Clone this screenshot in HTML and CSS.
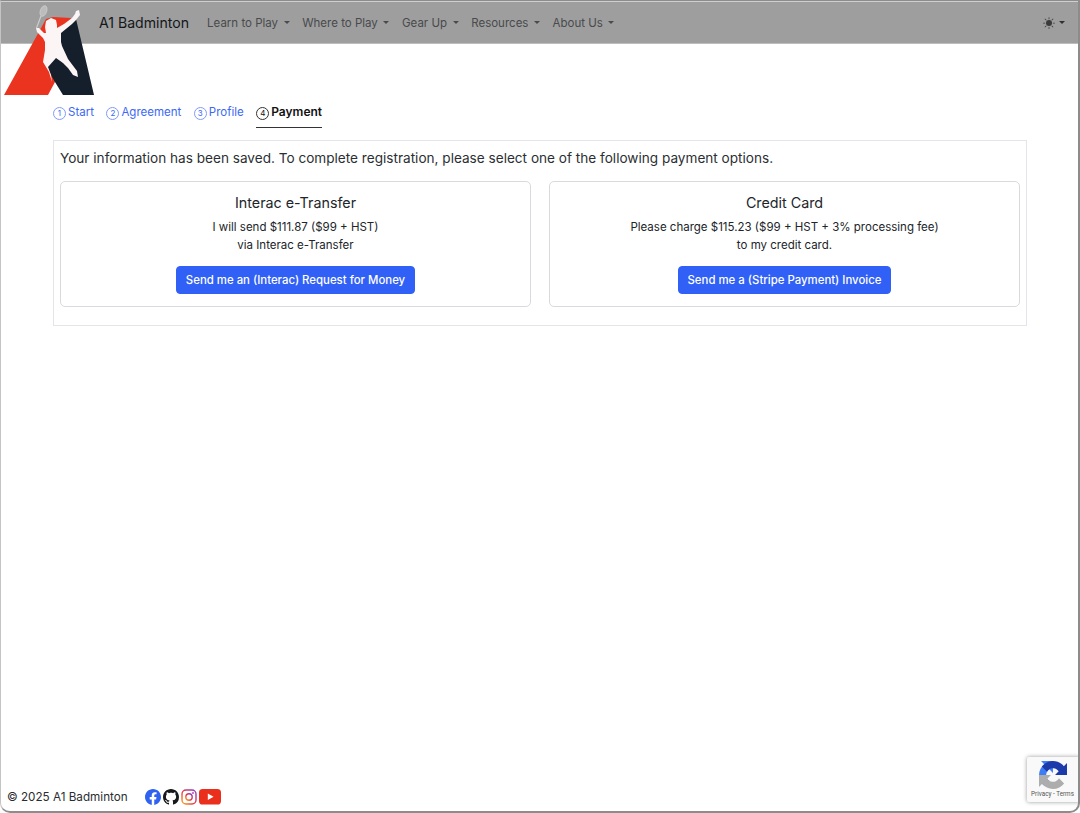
FILE: index.html
```html
<!DOCTYPE html>
<html lang="en">
<head>
<meta charset="utf-8">
<title>A1 Badminton</title>
<link rel="stylesheet" href="styles.css">
</head>
<body>
<div class="page">
  <nav class="navbar">
    <span class="brand">A1 Badminton</span>
    <ul class="menu">
      <li class="menu-item">Learn to Play<i class="caret"></i></li>
      <li class="menu-item">Where to Play<i class="caret"></i></li>
      <li class="menu-item">Gear Up<i class="caret"></i></li>
      <li class="menu-item">Resources<i class="caret"></i></li>
      <li class="menu-item">About Us<i class="caret"></i></li>
    </ul>
    <div class="theme">
      <svg class="sun" viewBox="0 0 16 16" aria-hidden="true"><path fill="#3a3a3a" d="M12 8a4 4 0 1 1-8 0 4 4 0 0 1 8 0zM8 0a.5.5 0 0 1 .5.5v2a.5.5 0 0 1-1 0v-2A.5.5 0 0 1 8 0zm0 13a.5.5 0 0 1 .5.5v2a.5.5 0 0 1-1 0v-2A.5.5 0 0 1 8 13zm8-5a.5.5 0 0 1-.5.5h-2a.5.5 0 0 1 0-1h2a.5.5 0 0 1 .5.5zM3 8a.5.5 0 0 1-.5.5h-2a.5.5 0 0 1 0-1h2A.5.5 0 0 1 3 8zm10.66-5.66a.5.5 0 0 1 0 .71l-1.41 1.41a.5.5 0 1 1-.71-.71l1.41-1.41a.5.5 0 0 1 .71 0zM4.46 11.54a.5.5 0 0 1 0 .71l-1.41 1.41a.5.5 0 0 1-.71-.71l1.41-1.41a.5.5 0 0 1 .71 0zm9.2 2.12a.5.5 0 0 1-.71 0l-1.41-1.41a.5.5 0 0 1 .71-.71l1.41 1.41a.5.5 0 0 1 0 .71zM4.46 4.46a.5.5 0 0 1-.71 0L2.34 3.05a.5.5 0 1 1 .71-.71l1.41 1.41a.5.5 0 0 1 0 .71z"/></svg>
      <i class="caret caret-dark"></i>
    </div>
  </nav>

  <svg class="logo" viewBox="0 0 100 100" aria-hidden="true">
    <path fill="#ea3420" d="M4 95 L46 19 L53 17 L71 18 L60 60 L55 82 L48 95 Z"/>
    <path fill="#151e2b" d="M76 19 L94 95 H63 L55 82 L52 77 L47 66 L55 57 L60 33 Z"/>
    <path fill="#fbf5f5" d="M79 10 L80 15 L76 20 L72 24 L61 33 L61 42 L62 46 L68 59 L77 71 L78 77 L73 75 L68 68 L63 63 L56 58 L48 67 L51 75 L52 82 L49 72 L43 62 L45 50 L45 42 L43 38 L37 32 L36 28 L39 28 L44 33 L46 33 L45 27 L46 21 L51 18 L56 20 L57 25 L57 28 L64 24 L72 18 L75 14 L76 11 Z"/>
    <path fill="none" stroke="#cfcfcf" stroke-width="1.2" d="M41 16 L36.5 28"/>
    <ellipse cx="43.5" cy="11" rx="3.2" ry="5.5" transform="rotate(20 43.5 11)" fill="#bcbcbc" stroke="#d4d4d4" stroke-width=".6"/>
  </svg>

  <main class="content">
    <ul class="steps">
      <li class="step"><span class="num">1</span>Start</li>
      <li class="step"><span class="num">2</span>Agreement</li>
      <li class="step"><span class="num">3</span>Profile</li>
      <li class="step step-active"><span class="num">4</span>Payment</li>
    </ul>

    <section class="panel">
      <p class="lead">Your information has been saved. To complete registration, please select one of the following payment options.</p>
      <div class="options">
        <article class="card">
          <h2 class="card-title">Interac e-Transfer</h2>
          <p class="card-text">I will send $111.87 ($99 + HST)<br>via Interac e-Transfer</p>
          <button class="btn">Send me an (Interac) Request for Money</button>
        </article>
        <article class="card">
          <h2 class="card-title">Credit Card</h2>
          <p class="card-text">Please charge $115.23 ($99 + HST + 3% processing fee)<br>to my credit card.</p>
          <button class="btn">Send me a (Stripe Payment) Invoice</button>
        </article>
      </div>
    </section>
  </main>

  <footer class="footer">
    <span class="copy">© 2025 A1 Badminton</span>
    <div class="socials">
      <svg class="soc" viewBox="0 0 16 16" aria-hidden="true"><path fill="#2f62f0" d="M16 8.05C16 3.6 12.42 0 8 0S0 3.6 0 8.05c0 4.02 2.93 7.35 6.75 7.95v-5.62H4.72V8.05h2.03V6.28c0-2.02 1.2-3.13 3.02-3.13.88 0 1.8.16 1.8.16v1.98h-1.01c-1 0-1.31.62-1.31 1.26v1.5h2.22l-.35 2.33H9.25V16C13.07 15.4 16 12.07 16 8.05z"/></svg>
      <svg class="soc" viewBox="0 0 16 16" aria-hidden="true"><path fill="#16181c" d="M8 0C3.58 0 0 3.58 0 8c0 3.54 2.29 6.53 5.47 7.59.4.07.55-.17.55-.38 0-.19-.01-.82-.01-1.49-2.01.37-2.53-.49-2.69-.94-.09-.23-.48-.94-.82-1.13-.28-.15-.68-.52-.01-.53.63-.01 1.08.58 1.23.82.72 1.21 1.87.87 2.33.66.07-.52.28-.87.51-1.07-1.78-.2-3.64-.89-3.64-3.95 0-.87.31-1.59.82-2.15-.08-.2-.36-1.02.08-2.12 0 0 .67-.21 2.2.82.64-.18 1.32-.27 2-.27s1.36.09 2 .27c1.53-1.04 2.2-.82 2.2-.82.44 1.1.16 1.92.08 2.12.51.56.82 1.27.82 2.15 0 3.07-1.87 3.75-3.65 3.95.29.25.54.73.54 1.48 0 1.07-.01 1.93-.01 2.2 0 .21.15.46.55.38A8.01 8.01 0 0 0 16 8c0-4.42-3.58-8-8-8z"/></svg>
      <svg class="soc" viewBox="0 0 16 16" aria-hidden="true">
        <defs><linearGradient id="ig" x1="0" y1="1" x2="1" y2="0"><stop offset="0" stop-color="#f5a623"/><stop offset=".45" stop-color="#e8383f"/><stop offset="1" stop-color="#8a3ac8"/></linearGradient></defs>
        <rect x="1" y="1" width="14" height="14" rx="4" fill="none" stroke="url(#ig)" stroke-width="1.4"/>
        <circle cx="8" cy="8" r="3.2" fill="none" stroke="url(#ig)" stroke-width="1.4"/>
        <circle cx="12" cy="4" r=".9" fill="#b23ab0"/>
      </svg>
      <svg class="soc-yt" viewBox="0 0 22 16" aria-hidden="true"><rect width="22" height="15.5" rx="3.6" fill="#ea2f1c"/><path fill="#fff" d="M8.8 4.6 L14.6 7.8 L8.8 11 Z"/></svg>
    </div>
  </footer>

  <aside class="recaptcha">
    <svg class="rc-icon" viewBox="0 0 64 64" aria-hidden="true">
      <path fill="#3d7df5" transform="rotate(-90 32 32)" d="M64 31.955l-.033-1.37V4.687l-7.16 7.16C50.948 4.674 42.033.093 32.05.093c-10.4 0-19.622 4.96-25.458 12.64l11.736 11.86a15.55 15.55 0 0 1 4.754-5.334c2.05-1.6 4.952-2.906 8.968-2.906.485 0 .86.057 1.135.163 4.976.393 9.288 3.14 11.828 7.124l-8.307 8.307c10.522-.04 22.4-.066 27.295.006"/>
      <path fill="#adadad" transform="rotate(180 32 32)" d="M64 31.955l-.033-1.37V4.687l-7.16 7.16C50.948 4.674 42.033.093 32.05.093c-10.4 0-19.622 4.96-25.458 12.64l11.736 11.86a15.55 15.55 0 0 1 4.754-5.334c2.05-1.6 4.952-2.906 8.968-2.906.485 0 .86.057 1.135.163 4.976.393 9.288 3.14 11.828 7.124l-8.307 8.307c10.522-.04 22.4-.066 27.295.006"/>
      <path fill="#1c3aa9" d="M64 31.955l-.033-1.37V4.687l-7.16 7.16C50.948 4.674 42.033.093 32.05.093c-10.4 0-19.622 4.96-25.458 12.64l11.736 11.86a15.55 15.55 0 0 1 4.754-5.334c2.05-1.6 4.952-2.906 8.968-2.906.485 0 .86.057 1.135.163 4.976.393 9.288 3.14 11.828 7.124l-8.307 8.307c10.522-.04 22.4-.066 27.295.006"/>
    </svg>
    <span class="rc-text">Privacy - Terms</span>
  </aside>

  <div class="frame"></div>
</div>
</body>
</html>
```
FILE: styles.css
```css
* { box-sizing: border-box; }
html, body { margin: 0; height: 100%; }
body {
  font-family: Inter, "Liberation Sans", sans-serif;
  font-size: 11.5px;
  line-height: 18px;
  color: #212529;
  background: #fff;
}
.page {
  position: relative;
  height: 813px;
  overflow: hidden;
  display: flex;
  flex-direction: column;
}
.navbar {
  height: 43px;
  margin-top: 1px;
  padding: 0 15px 0 99px;
  background: #9e9e9e;
  border-top: 1px solid #cfcfcf;
  border-bottom: 1px solid #bdbdbd;
  display: flex;
  align-items: center;
  flex: none;
}
.brand { font-size: 14.1px; color: #14171a; margin-right: 18px; }
.menu {
  list-style: none;
  margin: 0;
  padding: 0;
  display: flex;
  gap: 12.7px;
}
.menu-item { color: #484a4c; display: flex; align-items: center; }
.caret {
  display: inline-block;
  margin-left: 5.5px;
  border-top: 3.5px solid #484a4c;
  border-left: 3.5px solid transparent;
  border-right: 3.5px solid transparent;
}
.theme { margin-left: auto; display: flex; align-items: center; }
.sun { width: 12px; height: 12px; }
.caret-dark { margin-left: 4px; border-top-color: #2f2f2f; }
.logo {
  position: absolute;
  left: 0;
  top: 0;
  width: 100px;
  height: 100px;
}
.content { padding: 0 53px; flex: 1; }
.steps {
  list-style: none;
  margin: 0;
  padding: 0;
  margin-top: 56px;
  display: flex;
  gap: 12.5px;
}
.step {
  color: #3d68f5;
  height: 28px;
  padding-top: 3px;
  display: flex;
  align-items: flex-start;
}
.num {
  width: 13px;
  height: 13px;
  margin-top: 4px;
  margin-right: 2px;
  border: 1px solid #7f9bf7;
  border-radius: 50%;
  font-size: 8px;
  line-height: 11px;
  text-align: center;
}
.step-active {
  color: #111;
  font-size: 12px;
  font-weight: 600;
  border-bottom: 1px solid #333;
}
.step-active .num { font-weight: 400; border-color: #333; }
.panel {
  margin-top: 12px;
  height: 186px;
  padding: 6px;
  border: 1px solid #e4e5ea;
}
.lead {
  margin: 0 0 12px;
  font-size: 13.6px;
  line-height: 22px;
  color: #2b2f33;
}
.options { display: grid; grid-template-columns: 1fr 1fr; gap: 18px; }
.card {
  height: 126px;
  padding: 12px 12px 11px;
  border: 1px solid #d9dadd;
  border-radius: 5px;
  text-align: center;
}
.card-title {
  margin: 0 0 6px;
  font-size: 14.3px;
  line-height: 18px;
  font-weight: 400;
  color: #212529;
}
.card-text { margin: 0 0 12px; }
.btn {
  font: 500 11.4px/18px Inter, "Liberation Sans", sans-serif;
  height: 28px;
  padding: 0 9px;
  color: #fff;
  background: #3060f6;
  border: 1px solid #3060f6;
  border-radius: 4px;
}
.footer {
  flex: none;
  height: 38px;
  padding: 0 0 7px 7px;
  display: flex;
  align-items: flex-end;
}
.copy { color: #2a2d30; width: 138px; font-size: 11.7px; }
.socials { display: flex; align-items: center; gap: 2px; margin-bottom: 1px; }
.soc { width: 16px; height: 16px; }
.soc-yt { width: 22px; height: 16px; }
.recaptcha {
  position: absolute;
  right: 0;
  top: 757px;
  width: 53px;
  height: 45px;
  padding: 4px 2px 0 0;
  background: #f9f9f9;
  box-shadow: 0 0 4px rgba(0, 0, 0, .4);
  border-radius: 2px 0 0 2px;
  text-align: center;
  display: flex;
  flex-direction: column;
  align-items: center;
}
.rc-icon { width: 28px; height: 28px; flex: none; }
.rc-text { font: 6.3px/8px Roboto, "Liberation Sans", sans-serif; color: #555; margin-top: 1px; }
.frame {
  position: absolute;
  inset: 0;
  border: 1px solid #8c8c8c;
  border-left-color: #c4c4c4;
  border-right-width: 2px;
  border-bottom-width: 2px;
  border-radius: 0 0 10px 10px;
  pointer-events: none;
}
```
